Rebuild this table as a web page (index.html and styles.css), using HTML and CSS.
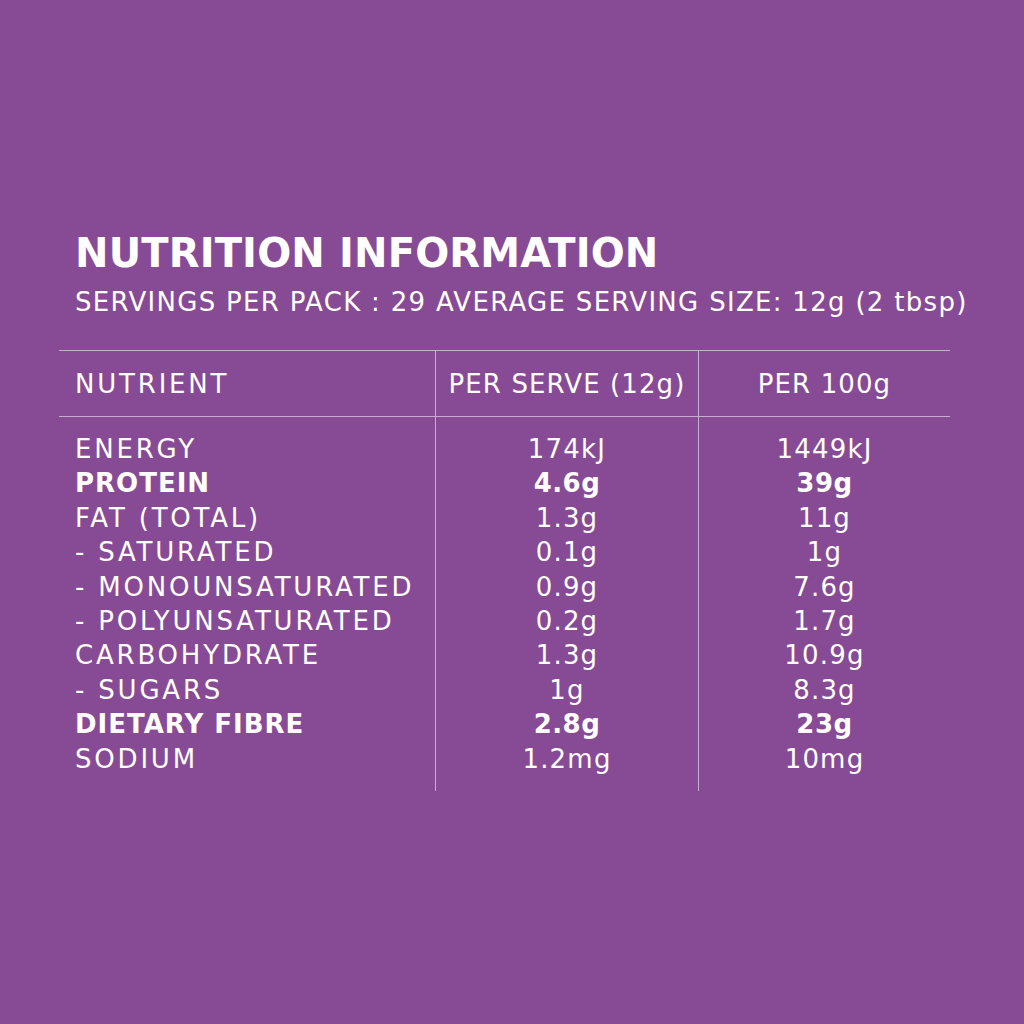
FILE: index.html
```html
<!DOCTYPE html>
<html lang="en">
<head>
<meta charset="utf-8">
<title>Nutrition Information</title>
<link rel="stylesheet" href="styles.css">
</head>
<body>
<main class="panel">
  <header class="intro">
    <h1 class="title">NUTRITION INFORMATION</h1>
    <p class="subtitle">SERVINGS PER PACK : 29 AVERAGE SERVING SIZE: 12g (2 tbsp)</p>
  </header>
  <table class="facts">
    <thead>
      <tr>
        <th class="name">NUTRIENT</th>
        <th class="val">PER SERVE (12g)</th>
        <th class="val">PER 100g</th>
      </tr>
    </thead>
    <tbody>
      <tr><td class="name">ENERGY</td><td class="val">174kJ</td><td class="val">1449kJ</td></tr>
      <tr class="strong"><td class="name">PROTEIN</td><td class="val">4.6g</td><td class="val">39g</td></tr>
      <tr><td class="name">FAT (TOTAL)</td><td class="val">1.3g</td><td class="val">11g</td></tr>
      <tr><td class="name">- SATURATED</td><td class="val">0.1g</td><td class="val">1g</td></tr>
      <tr><td class="name">- MONOUNSATURATED</td><td class="val">0.9g</td><td class="val">7.6g</td></tr>
      <tr><td class="name">- POLYUNSATURATED</td><td class="val">0.2g</td><td class="val">1.7g</td></tr>
      <tr><td class="name">CARBOHYDRATE</td><td class="val">1.3g</td><td class="val">10.9g</td></tr>
      <tr><td class="name">- SUGARS</td><td class="val">1g</td><td class="val">8.3g</td></tr>
      <tr class="strong"><td class="name">DIETARY FIBRE</td><td class="val">2.8g</td><td class="val">23g</td></tr>
      <tr><td class="name">SODIUM</td><td class="val">1.2mg</td><td class="val">10mg</td></tr>
    </tbody>
  </table>
</main>
</body>
</html>
```
FILE: styles.css
```css
html, body {
  margin: 0;
  padding: 0;
}
body {
  background: #874b96;
  color: #ffffff;
  font-family: "DejaVu Sans", "Open Sans", sans-serif;
  width: 1024px;
  height: 1024px;
}
.panel {
  padding: 229px 0 0 59px;
}
.intro {
  padding-left: 16px;
}
.title {
  margin: 0;
  font-size: 40px;
  font-weight: 700;
  line-height: 48px;
  letter-spacing: 0.15px;
}
.subtitle {
  margin: 10px 0 0;
  font-size: 26px;
  font-weight: 400;
  line-height: 30px;
  letter-spacing: 1.3px;
}
.facts {
  margin-top: 33px;
  width: 891px;
  border-collapse: collapse;
  border-top: 1px solid rgba(255, 255, 255, 0.55);
  font-size: 26px;
}
.facts th,
.facts td {
  padding: 0;
  font-weight: 400;
  white-space: nowrap;
}
.facts th {
  height: 65px;
  border-bottom: 1px solid rgba(255, 255, 255, 0.55);
}
.facts td {
  height: 34.4px;
  line-height: 34.4px;
}
.facts .name {
  width: 360px;
  padding-left: 16px;
  text-align: left;
  letter-spacing: 2.8px;
}
.facts .val {
  text-align: center;
  letter-spacing: 1.2px;
  border-left: 1px solid rgba(255, 255, 255, 0.55);
}
.facts th.val {
  letter-spacing: 1.1px;
}
.facts th.val:nth-child(2) {
  width: 262px;
}
.facts tbody tr:first-child td {
  padding-top: 15px;
}
.facts tbody tr:last-child td {
  padding-bottom: 15px;
}
.facts .strong td {
  font-weight: 700;
}
.facts .strong .name {
  letter-spacing: 1px;
}
.facts .strong .val {
  letter-spacing: 0.5px;
}
```
